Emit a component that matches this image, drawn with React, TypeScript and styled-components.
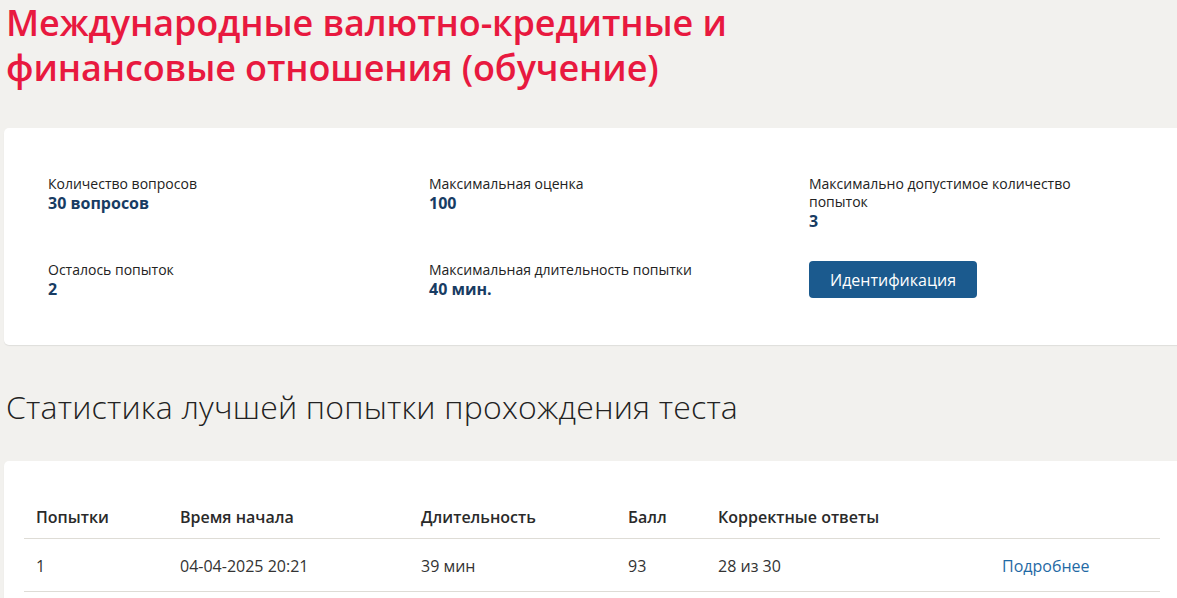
import React from 'react';
import styled, { createGlobalStyle } from 'styled-components';

const GlobalStyle = createGlobalStyle`
  html, body {
    margin: 0;
    padding: 0;
    background: #f2f1ee;
  }
  body {
    font-family: 'Open Sans', 'Noto Sans', sans-serif;
    color: #222;
    overflow: hidden;
  }
`;

const Page = styled.div`
  padding: 0 0 40px 4px;
  width: 1200px;
`;

const Title = styled.h1`
  margin: 0;
  padding: 0 0 0 2px;
  font-family: 'Open Sans', 'Noto Sans', sans-serif;
  font-size: 36px;
  line-height: 45px;
  font-weight: 600;
  color: #e8193f;
  letter-spacing: -0.1px;
`;

const Card = styled.div<{ $pad: string }>`
  background: #fff;
  border-radius: 5px;
  box-shadow: 0 1px 1px rgba(0, 0, 0, 0.08);
  padding: ${(p) => p.$pad};
`;

const InfoCard = styled(Card)`
  margin-top: 38px;
`;

const InfoGrid = styled.div`
  display: grid;
  grid-template-columns: 381px 380px 1fr;
  row-gap: 30px;
  align-items: start;
`;

const Info = styled.div`
  display: flex;
  flex-direction: column;
  max-width: 300px;
`;

const Label = styled.span`
  font-size: 14px;
  line-height: 18px;
  color: #222;
`;

const Value = styled.span`
  font-size: 16px;
  line-height: 20px;
  font-weight: 700;
  color: #183c63;
`;

const Button = styled.button`
  align-self: start;
  justify-self: start;
  height: 37px;
  padding: 0 21px;
  border: none;
  border-radius: 4px;
  background: #1b5a8e;
  color: #fff;
  font-family: 'Open Sans', 'Noto Sans', sans-serif;
  font-size: 16px;
  cursor: pointer;
`;

const SectionTitle = styled.h2`
  margin: 42px 0 34px;
  padding-left: 2px;
  font-family: 'Open Sans', 'Noto Sans', sans-serif;
  font-size: 32px;
  line-height: 40px;
  font-weight: 300;
  letter-spacing: 0.2px;
  color: #222;
`;

const Table = styled.table`
  width: 1136px;
  border-collapse: collapse;
  table-layout: fixed;
`;

const Th = styled.th<{ $w?: number }>`
  box-sizing: border-box;
  width: ${(p) => (p.$w ? `${p.$w}px` : 'auto')};
  text-align: left;
  padding: 24px 12px 9px;
  font-size: 16px;
  line-height: 24px;
  font-weight: 600;
  color: #2a2a2a;
  border-bottom: 1px solid #dedcd6;
`;

const Td = styled.td`
  padding: 15px 12px 13px;
  font-size: 16px;
  line-height: 24px;
  color: #333;
  border-bottom: 1px solid #dedcd6;
`;

const MoreLink = styled.a`
  color: #1f6aa5;
  text-decoration: none;
`;

const infos = [
  { label: 'Количество вопросов', value: '30 вопросов' },
  { label: 'Максимальная оценка', value: '100' },
  { label: 'Максимально допустимое количество попыток', value: '3' },
  { label: 'Осталось попыток', value: '2' },
  { label: 'Максимальная длительность попытки', value: '40 мин.' },
];

const columns = [
  { title: 'Попытки', w: 144 },
  { title: 'Время начала', w: 241 },
  { title: 'Длительность', w: 207 },
  { title: 'Балл', w: 90 },
  { title: 'Корректные ответы', w: 284 },
  { title: '' },
];

export default function App() {
  return (
    <Page>
      <GlobalStyle />
      <Title>
        Международные валютно-кредитные и
        <br />
        финансовые отношения (обучение)
      </Title>
      <InfoCard $pad="47px 44px 46px">
        <InfoGrid>
          {infos.map((i) => (
            <Info key={i.label}>
              <Label>{i.label}</Label>
              <Value>{i.value}</Value>
            </Info>
          ))}
          <Button>Идентификация</Button>
        </InfoGrid>
      </InfoCard>
      <SectionTitle>Статистика лучшей попытки прохождения теста</SectionTitle>
      <Card $pad="20px 20px 25px">
        <Table>
          <thead>
            <tr>
              {columns.map((c, i) => (
                <Th key={i} $w={c.w}>
                  {c.title}
                </Th>
              ))}
            </tr>
          </thead>
          <tbody>
            <tr>
              <Td>1</Td>
              <Td>04-04-2025 20:21</Td>
              <Td>39 мин</Td>
              <Td>93</Td>
              <Td>28 из 30</Td>
              <Td>
                <MoreLink href="#">Подробнее</MoreLink>
              </Td>
            </tr>
          </tbody>
        </Table>
      </Card>
    </Page>
  );
}
